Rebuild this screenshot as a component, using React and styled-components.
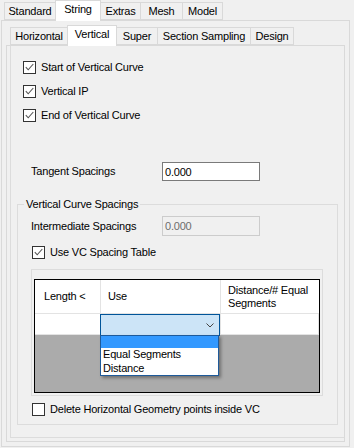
import React from "react";
import styled, { createGlobalStyle } from "styled-components";

const GlobalStyle = createGlobalStyle`
  body {
    margin: 0;
    background: #f0f0f0;
    font-family: "Liberation Sans", Arial, sans-serif;
    font-size: 11px;
    letter-spacing: -0.2px;
    color: #000;
  }
`;

const Window = styled.div`
  width: 354px;
  height: 448px;
  padding-left: 1px;
  box-sizing: border-box;
  overflow: hidden;
`;

const TabControl = styled.div`
  display: flex;
  flex-direction: column;
  width: ${(p) => p.$width}px;
  height: ${(p) => p.$height}px;
`;

const TabStrip = styled.div`
  display: flex;
  align-items: flex-end;
  height: 20px;
  padding-left: ${(p) => p.$indent}px;
  position: relative;
  z-index: 1;
  flex: none;
`;

const Tab = styled.div`
  box-sizing: border-box;
  width: ${(p) => p.$w}px;
  height: ${(p) => (p.$active ? 21 : 18)}px;
  margin-bottom: ${(p) => (p.$active ? -1 : 0)}px;
  margin-left: -1px;
  &:first-child {
    margin-left: 0;
  }
  border: 1px solid #d9d9d9;
  border-bottom: ${(p) => (p.$active ? "none" : "1px solid #d9d9d9")};
  background: ${(p) => (p.$active ? "#fff" : "#f0f0f0")};
  display: flex;
  align-items: center;
  justify-content: center;
  padding-bottom: ${(p) => (p.$active ? 3 : 0)}px;
  line-height: 13px;
  white-space: nowrap;
  position: relative;
  z-index: ${(p) => (p.$active ? 2 : 1)};
`;

const Panel = styled.div`
  flex: 1;
  box-sizing: border-box;
  border: 1px solid #d9d9d9;
  background: #f0f0f0;
  padding: ${(p) => p.$pad}px;
  display: flex;
  flex-direction: column;
`;

const Page = styled.div`
  flex: 1;
  margin: 0 0 3px 3px;
  border-left: 1px solid #dcdcdc;
  border-bottom: 1px solid #dcdcdc;
  padding: 15px 0 0 6px;
  display: flex;
  flex-direction: column;
`;

const CheckList = styled.div`
  display: flex;
  flex-direction: column;
  gap: 11px;
  margin-left: 6px;
`;

const CheckRow = styled.label`
  display: flex;
  align-items: center;
  gap: 5px;
  height: 13px;
  line-height: 13px;
  margin-left: ${(p) => p.$left || 0}px;
  margin-top: ${(p) => p.$top || 0}px;
`;

const Box = styled.span`
  box-sizing: border-box;
  width: 13px;
  height: 13px;
  border: 1px solid #333;
  background: #fff;
  display: inline-flex;
  flex: none;
`;

const FieldRow = styled.div`
  display: flex;
  align-items: center;
  margin-left: ${(p) => p.$left}px;
  margin-top: ${(p) => p.$top}px;
`;

const FieldLabel = styled.span`
  width: 131px;
  line-height: 13px;
`;

const TextBox = styled.div`
  box-sizing: border-box;
  width: 98px;
  height: ${(p) => p.$h}px;
  border: 1px solid ${(p) => (p.$disabled ? "#cccccc" : "#7a7a7a")};
  background: ${(p) => (p.$disabled ? "#f0f0f0" : "#fff")};
  color: ${(p) => (p.$disabled ? "#6d6d6d" : "#000")};
  padding-left: 2px;
  display: flex;
  align-items: center;
`;

const GroupBox = styled.fieldset`
  box-sizing: border-box;
  width: 321px;
  margin: 17px 0 0 0;
  padding: 0 0 8px 0;
  border: 1px solid #dcdcdc;
  display: flex;
  flex-direction: column;
  min-width: 0;
`;

const Legend = styled.legend`
  padding: 0 2px;
  margin-left: 6px;
  line-height: 13px;
  color: #000;
`;

const GridFrame = styled.div`
  box-sizing: border-box;
  width: 292px;
  height: 127px;
  margin: 10px 0 0 13px;
  border: 1px solid #dcdcdc;
  padding: 9px 2px 2px 2px;
  display: flex;
`;

const Grid = styled.div`
  flex: 1;
  border: 1px solid #000;
  background: #ababab;
  display: grid;
  grid-template-columns: 66px 120px 98px;
  grid-template-rows: 34px 21px;
  align-content: start;
`;

const HeadCell = styled.div`
  background: #fff;
  border-right: 1px solid #e3e3e3;
  border-bottom: 1px solid #e3e3e3;
  &:nth-child(3) {
    border-right: none;
  }
  padding-left: ${(p) => p.$pad}px;
  display: flex;
  align-items: center;
  line-height: 13px;
`;

const Cell = styled.div`
  background: #fff;
  border-right: 1px solid #e3e3e3;
  border-bottom: 1px solid #e3e3e3;
  position: relative;
`;

const Combo = styled.div`
  position: absolute;
  left: -1px;
  top: 0;
  width: 120px;
  height: 22px;
  box-sizing: border-box;
  border: 1px solid #005499;
  background: #cce4f7;
  display: flex;
  align-items: center;
  justify-content: flex-end;
  padding-right: 5px;
  z-index: 2;
`;

const DropList = styled.div`
  position: absolute;
  left: -1px;
  top: 21px;
  width: 119px;
  box-sizing: border-box;
  border: 1px solid #1e5a9a;
  background: #fff;
  box-shadow: 2px 2px 3px rgba(0, 0, 0, 0.35);
  z-index: 3;
`;

const DropItem = styled.div`
  height: ${(p) => p.$h}px;
  line-height: ${(p) => p.$h}px;
  padding-left: 2px;
  background: ${(p) => (p.$hot ? "#3399ff" : "#fff")};
  color: ${(p) => (p.$hot ? "#fff" : "#000")};
  font-size: 11px;
`;

const Check = ({ checked, children, ...rest }) => (
  <CheckRow {...rest}>
    <Box>
      {checked && (
        <svg width="11" height="11" viewBox="0 0 11 11">
          <path d="M1.8 5.2 L4.2 7.8 L9.3 2" stroke="#555" strokeWidth="1.1" fill="none" />
        </svg>
      )}
    </Box>
    <span>{children}</span>
  </CheckRow>
);

const outerTabs = [
  ["Standard", 52],
  ["String", 46],
  ["Extras", 41],
  ["Mesh", 43],
  ["Model", 41],
];

const innerTabs = [
  ["Horizontal", 58],
  ["Vertical", 50],
  ["Super", 42],
  ["Section Sampling", 94],
  ["Design", 44],
];

export default function App() {
  return (
    <Window>
      <GlobalStyle />
      <TabControl $width={349} $height={447}>
        <TabStrip $indent={3}>
          {outerTabs.map(([name, w]) => (
            <Tab key={name} $w={w} $active={name === "String"}>
              {name}
            </Tab>
          ))}
        </TabStrip>
        <Panel $pad={4}>
          <TabControl $width={339} $height={417}>
            <TabStrip $indent={4}>
              {innerTabs.map(([name, w]) => (
                <Tab key={name} $w={w} $active={name === "Vertical"}>
                  {name}
                </Tab>
              ))}
            </TabStrip>
            <Panel $pad={0}>
              <Page>
                <CheckList>
                  <Check checked>Start of Vertical Curve</Check>
                  <Check checked>Vertical IP</Check>
                  <Check checked>End of Vertical Curve</Check>
                </CheckList>

                <FieldRow $left={14} $top={40}>
                  <FieldLabel>Tangent Spacings</FieldLabel>
                  <TextBox $h={19}>0.000</TextBox>
                </FieldRow>

                <GroupBox>
                  <Legend>Vertical Curve Spacings</Legend>
                  <FieldRow $left={13} $top={5}>
                    <FieldLabel>Intermediate Spacings</FieldLabel>
                    <TextBox $h={20} $disabled>
                      0.000
                    </TextBox>
                  </FieldRow>
                  <Check checked $left={14} $top={10}>
                    Use VC Spacing Table
                  </Check>
                  <GridFrame>
                    <Grid>
                      <HeadCell $pad={9}>Length &lt;</HeadCell>
                      <HeadCell $pad={7}>Use</HeadCell>
                      <HeadCell $pad={7}>
                        Distance/# Equal
                        <br />
                        Segments
                      </HeadCell>
                      <Cell />
                      <Cell>
                        <Combo>
                          <svg width="8" height="5" viewBox="0 0 8 5">
                            <path d="M0.5 0.5 L4 4 L7.5 0.5" stroke="#444" strokeWidth="1" fill="none" />
                          </svg>
                        </Combo>
                        <DropList>
                          <DropItem $hot $h={12} />
                          <DropItem $h={13}>Equal Segments</DropItem>
                          <DropItem $h={14}>Distance</DropItem>
                        </DropList>
                      </Cell>
                      <Cell />
                    </Grid>
                  </GridFrame>
                  <Check $left={14} $top={7}>
                    Delete Horizontal Geometry points inside VC
                  </Check>
                </GroupBox>
              </Page>
            </Panel>
          </TabControl>
        </Panel>
      </TabControl>
    </Window>
  );
}
